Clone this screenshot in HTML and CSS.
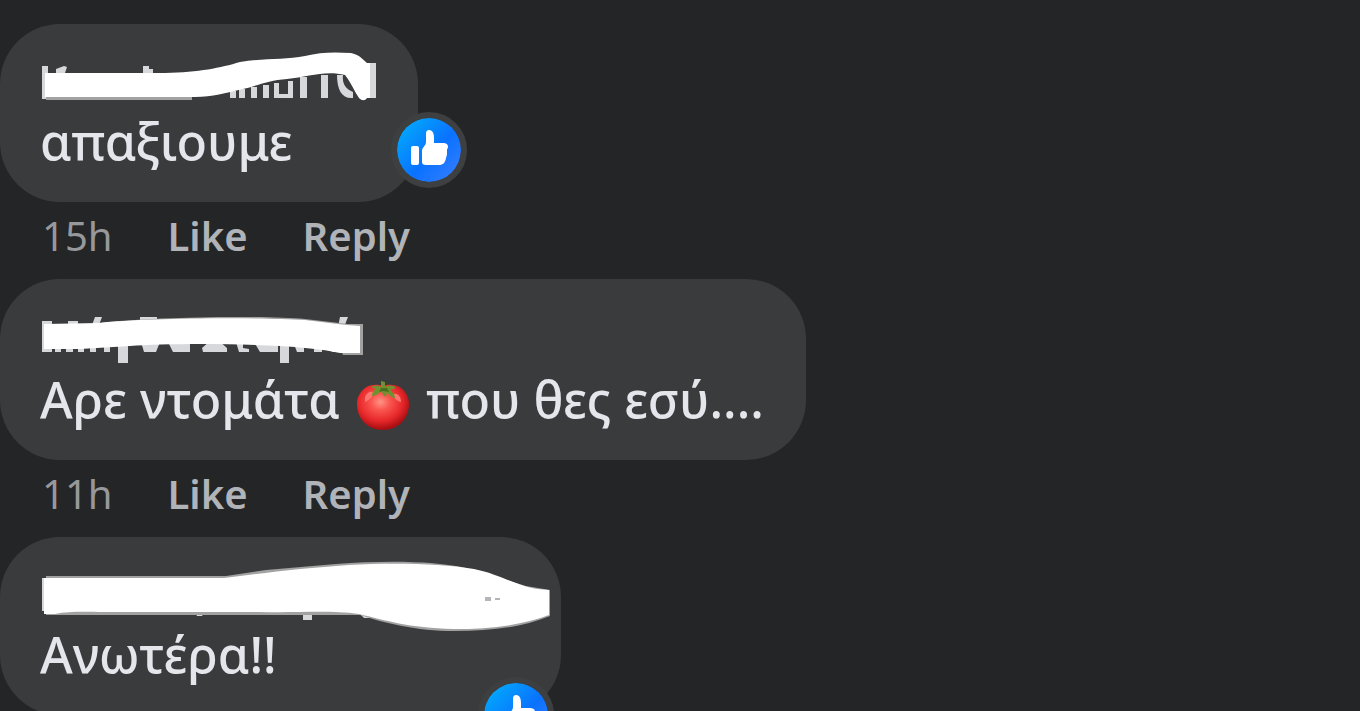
FILE: index.html
```html
<!DOCTYPE html>
<html lang="el">
<head>
    <meta charset="UTF-8">
    <meta name="viewport" content="width=device-width, initial-scale=1.0">
    <title>Comments</title>
    <link rel="stylesheet" href="styles.css">
</head>
<body>
    <!-- shared thumb icon -->
    <svg class="defs" width="0" height="0" aria-hidden="true">
        <defs>
            <linearGradient id="like-blue" x1="0.1" y1="0.15" x2="0.85" y2="0.85">
                <stop offset="0" stop-color="#02a5fc"/>
                <stop offset="0.6" stop-color="#0a72ff"/>
                <stop offset="1" stop-color="#2b7aff"/>
            </linearGradient>
            <symbol id="like-icon" viewBox="0 0 64 64">
                <circle cx="32" cy="32" r="32" fill="url(#like-blue)"/>
                <path fill="#fff" d="M14 30q0-2 2-2h4q2 0 2 2v15q0 2-2 2h-4q-2 0-2-2z"/>
                <path fill="#fff" d="M25 33c0-4 4-5 4-9v-8c0-3 1-4 3-4 4 0 5 4 5 8v5h9c3 0 5 1 5 4 0 1-1 2-1 3v4c0 2-1 3-1 4-1 5-3 7-7 7H29c-3 0-4-1-4-3z"/>
            </symbol>
        </defs>
    </svg>

    <main class="comments">
        <article class="comment">
            <div class="bubble">
                <svg class="name" width="336" height="56" viewBox="0 0 336 56" aria-hidden="true">
                    <path class="marks" d="M2 15h6v33H2zM16 18l8-3 3 1-2 6h-9zM103 15h6v3h4v4h-10zM190 40h6v7h-6zM199 38h6v9h-6zM211 36h6v11h-6zM223 34h6v13h-6zM234 32h5v15h-5zM239 43h8v4h-8zM248 30h5v17h-10v-4h5zM260 26h7v21h-7zM281 24h7v23h-7zM297 24h6c-1 8 2 14 10 17v6c-11 1-16-8-16-23zM327 12h9v35h-9z"/>
                    <path class="edge" d="M6 46h146v3H6z"/>
                    <path class="scribble" d="M5 22h120c35-1 55-5 75-11 25-4 45-2 65-6 15-4 30-4 46-3 10 2 14 9 16 10h3v35h-3c-2 3-5 3-8 0-5-7-7-14-14-23-20-5-37 2-58 4-18 1-30 7-44 10-18 4-30 8-48 8H5z"/>
                </svg>
                <p class="text">απαξιουμε</p>
                <svg class="badge" viewBox="0 0 64 64" role="img" aria-label="Like"><use href="#like-icon"/></svg>
            </div>
            <div class="actions">
                <a class="time" href="#">15h</a>
                <button type="button">Like</button>
                <button type="button">Reply</button>
            </div>
        </article>

        <article class="comment">
            <div class="bubble">
                <svg class="name" width="324" height="56" viewBox="0 0 324 56" aria-hidden="true">
                    <path class="marks" d="M2 15h10v31H2zM28 15h10v8H28zM55 11h7l-3 8h-7zM100 11h17v8h-17zM300 11h8l-4 10h-6zM15 38h6v8h-6zM26 38h7v8h-7zM38 38h6v8h-6zM50 38h6v8h-6zM64 38h6v8h-6zM78 38h10v19h-10zM101 36h19l-4 10h-12zM128 36h22v10h-17zM162 42l8-7h9l8 7v4h-24zM196 36h7v6l6 1v3h-10zM214 36h24v10h-18zM240 38h9v19h-9zM254 38h10v8h-7zM274 40h8v6h-8zM290 40h10v6h-8z"/>
                    <path class="edge" d="M60 17c45-6 160-8 205-4l43 5h15v31h-20l-5-12H60z"/>
                    <path class="scribble" d="M4 18l55-1c45-5 150-6 206-3 20 2 38 5 55 6v27h-20c-20-4-40-6-60-7-60-3-120-2-150 0l-50 3H4z"/>
                </svg>
                <p class="text">Αρε ντομάτα <svg class="emoji" viewBox="0 0 52 52" role="img" aria-label="tomato">
                    <defs>
                        <radialGradient id="tomato" cx="0.45" cy="0.38" r="0.6">
                            <stop offset="0" stop-color="#ff9486"/>
                            <stop offset="0.3" stop-color="#fa5650"/>
                            <stop offset="0.7" stop-color="#e7282a"/>
                            <stop offset="1" stop-color="#a90e12"/>
                        </radialGradient>
                    </defs>
                    <path fill="url(#tomato)" d="M26 6c5-2 13-2 18 2 5 4 8 9 8 16 0 15-11 26-26 26S0 39 0 24C0 17 3 12 8 8c5-4 13-4 18-2z"/>
                    <path fill="#ff7770" d="M8 17c2-5 6-6 8-5 1 3-3 8-8 10zM37 14c4-1 7 3 7 8-5-1-8-5-7-8z"/>
                    <path fill="#6f9230" d="M24 1l4 1v5c4-2 8-2 11 1l-6 2c3 2 5 5 5 8-3 0-6-3-8-6l-1 5c-3-1-4-4-4-6-3 1-5 5-10 5 0-4 2-6 4-7l-5-2c4-2 7-2 10 0z"/>
                    <path fill="#49701f" d="M24 8h6l2 4-6-1-4 1z"/>
                </svg> που θες εσύ....</p>
            </div>
            <div class="actions">
                <a class="time" href="#">11h</a>
                <button type="button">Like</button>
                <button type="button">Reply</button>
            </div>
        </article>

        <article class="comment">
            <div class="bubble">
                <svg class="name" width="479" height="56" viewBox="0 0 479 56" aria-hidden="true">
                    <path class="marks" d="M2 14h8v33H2zM154 46h12l-4 6h-5zM263 46h9v10h-9zM320 50h16l-5 4h-7z"/>
                    <path class="edge" d="M6 12h180l40-6 70-6c50-4 100-3 130 4l60 18 24 4v26c-30 12-60 15-95 15-40 0-70-8-95-16H6z"/>
                    <path class="scribble" d="M4 14h180c40-5 80-10 125-13 40-2 90-2 125 4 30 6 45 20 75 21v25c-30 11-60 14-95 14-45-1-70-9-95-15-30-4-60-1-100-2H65c-20 0-35-1-50 2H4z"/>
                    <path class="speck" d="M445 33h6v4h-6zM455 34h5v2h-5z"/>
                </svg>
                <p class="text">Ανωτέρα!!</p>
                <svg class="badge badge-low" viewBox="0 0 64 64" role="img" aria-label="Like"><use href="#like-icon"/></svg>
            </div>
        </article>
    </main>
</body>
</html>
```
FILE: styles.css
```css
* {
    box-sizing: border-box;
}

body {
    margin: 0;
    height: 100vh;
    overflow: hidden;
    background-color: #242526;
    color: #e4e6eb;
    font-family: "Noto Sans", "Open Sans", sans-serif;
}

.defs {
    position: absolute;
}

.comments {
    height: 100%;
    padding-top: 24px;
    overflow: hidden;
}

.comment {
    display: flex;
    flex-direction: column;
    align-items: flex-start;
}

.bubble {
    position: relative;
    padding: 27px 42px 27px 40px;
    border-radius: 60px;
    background-color: #3a3b3c;
}

/* painted-over author name */
.name {
    display: block;
    overflow: visible;
}

.scribble {
    fill: #ffffff;
}

.marks {
    fill: #d6d8dc;
}

.edge {
    fill: #a2a2a2;
}

.speck {
    fill: #b4b5b8;
}

.text {
    margin: 0;
    font-size: 50px;
    font-weight: 500;
    line-height: 68px;
    white-space: nowrap;
}

.emoji {
    width: 52px;
    height: 52px;
    margin: 18px 4px 0;
    vertical-align: -14px;
}

.badge {
    position: absolute;
    right: -49px;
    bottom: 14px;
    width: 76px;
    height: 76px;
    border: 6px solid #3e3f40;
    border-radius: 50%;
    background-color: #3e3f40;
}

.badge-low {
    right: 7px;
    bottom: -38px;
}

.actions {
    display: flex;
    gap: 55px;
    padding: 2px 42px 11px;
    font-size: 40px;
    line-height: 64px;
    color: #b0b3b8;
}

.actions a,
.actions button {
    padding: 0;
    border: none;
    background: none;
    color: inherit;
    font: inherit;
    text-decoration: none;
    cursor: pointer;
}

.actions button {
    font-weight: 600;
}

.actions .time {
    color: #96989c;
}

.actions a:hover,
.actions button:hover {
    text-decoration: underline;
}
```
